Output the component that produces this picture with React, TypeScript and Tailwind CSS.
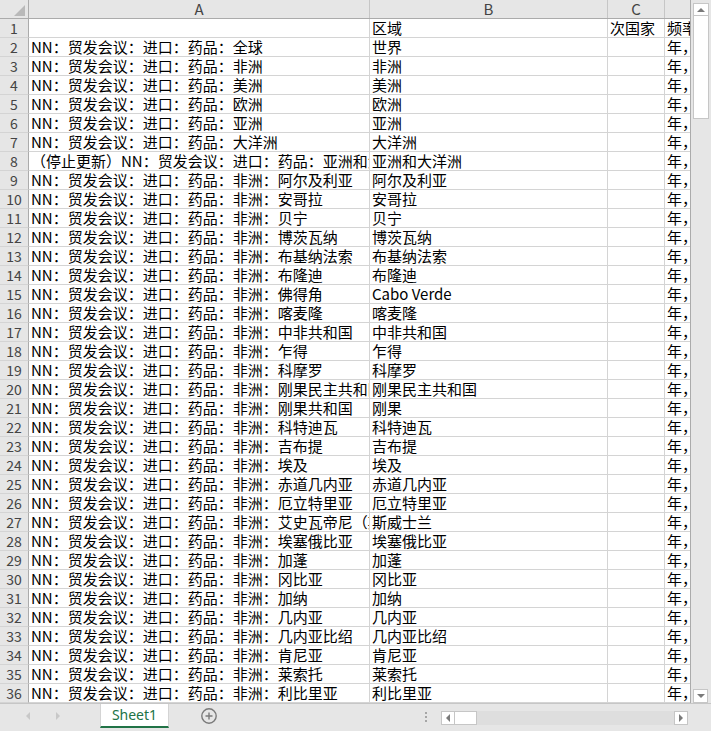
const P = 'NN：贸发会议：进口：药品：'

// [A, B] for rows 2..36
const ROWS: [string, string][] = [
  [P + '全球', '世界'],
  [P + '非洲', '非洲'],
  [P + '美洲', '美洲'],
  [P + '欧洲', '欧洲'],
  [P + '亚洲', '亚洲'],
  [P + '大洋洲', '大洋洲'],
  ['（停止更新）' + P + '亚洲和大洋洲', '亚洲和大洋洲'],
  [P + '非洲：阿尔及利亚', '阿尔及利亚'],
  [P + '非洲：安哥拉', '安哥拉'],
  [P + '非洲：贝宁', '贝宁'],
  [P + '非洲：博茨瓦纳', '博茨瓦纳'],
  [P + '非洲：布基纳法索', '布基纳法索'],
  [P + '非洲：布隆迪', '布隆迪'],
  [P + '非洲：佛得角', 'Cabo Verde'],
  [P + '非洲：喀麦隆', '喀麦隆'],
  [P + '非洲：中非共和国', '中非共和国'],
  [P + '非洲：乍得', '乍得'],
  [P + '非洲：科摩罗', '科摩罗'],
  [P + '非洲：刚果民主共和国', '刚果民主共和国'],
  [P + '非洲：刚果共和国', '刚果'],
  [P + '非洲：科特迪瓦', '科特迪瓦'],
  [P + '非洲：吉布提', '吉布提'],
  [P + '非洲：埃及', '埃及'],
  [P + '非洲：赤道几内亚', '赤道几内亚'],
  [P + '非洲：厄立特里亚', '厄立特里亚'],
  [P + '非洲：艾史瓦帝尼（斯威士兰）', '斯威士兰'],
  [P + '非洲：埃塞俄比亚', '埃塞俄比亚'],
  [P + '非洲：加蓬', '加蓬'],
  [P + '非洲：冈比亚', '冈比亚'],
  [P + '非洲：加纳', '加纳'],
  [P + '非洲：几内亚', '几内亚'],
  [P + '非洲：几内亚比绍', '几内亚比绍'],
  [P + '非洲：肯尼亚', '肯尼亚'],
  [P + '非洲：莱索托', '莱索托'],
  [P + '非洲：利比里亚', '利比里亚'],
]

const cell =
  'h-[19px] shrink-0 border-r border-b border-[#d4d4d4] overflow-hidden whitespace-nowrap pl-[2px] text-[15px] leading-[18px]'

function Tri({ dir, color = '#7a7a7a' }: { dir: 'up' | 'down' | 'left' | 'right'; color?: string }) {
  const pts = {
    up: '0,4 4,0 8,4',
    down: '0,0 8,0 4,4',
    left: '4,0 4,8 0,4',
    right: '0,0 0,8 4,4',
  }[dir]
  const vertical = dir === 'up' || dir === 'down'
  return (
    <svg width={vertical ? 8 : 4} height={vertical ? 4 : 8} viewBox={vertical ? '0 0 8 4' : '0 0 4 8'}>
      <polygon points={pts} fill={color} />
    </svg>
  )
}

function Row({ n, a, b, c, d }: { n: number; a: string; b: string; c: string; d: string }) {
  return (
    <div className="flex">
      <div className="w-[29px] h-[19px] shrink-0 border-r border-r-[#ababab] border-b border-b-[#d4d4d4] bg-[#e6e6e6] text-[#444] text-[14px] leading-[18px] text-center">
        {n}
      </div>
      <div className={`${cell} w-[341px]`}>{a}</div>
      <div className={`${cell} w-[238px]`}>{b}</div>
      <div className={`${cell} w-[57px]`}>{c}</div>
      <div className={`${cell} w-[25px] border-r-0`}>{d}</div>
    </div>
  )
}

export default function App() {
  return (
    <div className="w-[711px] h-[731px] flex flex-col bg-[#e6e6e6] overflow-hidden font-['Noto_Sans_CJK_SC','Noto_Sans',sans-serif] text-black">
      <div className="flex h-[703px] shrink-0">
        {/* sheet grid */}
        <div className="w-[691px] h-[703px] flex flex-col bg-white border-r border-[#ababab] overflow-hidden">
          {/* column headers */}
          <div className="flex h-[19px] shrink-0 bg-[#e6e6e6] border-b border-[#ababab] text-[#444] text-[15px] leading-[18px]">
            <div className="w-[29px] shrink-0 border-r border-[#ababab] flex items-end justify-end pr-[3px] pb-[2px]">
              <svg width="11" height="11" viewBox="0 0 11 11">
                <polygon points="11,0 11,11 0,11" fill="#b9b9b9" />
              </svg>
            </div>
            <div className="w-[341px] shrink-0 border-r border-[#c6c6c6] text-center">A</div>
            <div className="w-[238px] shrink-0 border-r border-[#c6c6c6] text-center">B</div>
            <div className="w-[57px] shrink-0 border-r border-[#c6c6c6] text-center">C</div>
            <div className="w-[25px] shrink-0" />
          </div>
          <Row n={1} a="" b="区域" c="次国家" d="频率" />
          {ROWS.map(([a, b], i) => (
            <Row key={i} n={i + 2} a={a} b={b} c="" d="年，" />
          ))}
        </div>

        {/* vertical scrollbar */}
        <div className="w-[20px] flex flex-col pl-[2px] pt-[3px]">
          <div className="w-[16px] h-[13px] bg-white border border-[#c6c6c6] flex items-center justify-center">
            <Tri dir="up" />
          </div>
          <div className="w-[16px] h-[103px] bg-white border border-t-0 border-[#c6c6c6]" />
          <div className="flex-1" />
          <div className="w-[15px] h-[14px] bg-white border border-[#c6c6c6] flex items-center justify-center">
            <Tri dir="down" />
          </div>
        </div>
      </div>

      {/* sheet tabs bar */}
      <div className="h-[28px] flex items-start border-t border-[#c6c6c6]">
        <div className="w-[100px] h-[24px] flex items-center pl-[26px] gap-[26px]">
          <Tri dir="left" color="#c8c8c8" />
          <Tri dir="right" color="#c8c8c8" />
        </div>
        <div className="w-[69px] h-[24px] bg-white border-x border-[#d4d4d4] border-b-2 border-b-[#217346] text-[#217346] text-[14px] leading-[22px] text-center font-['Noto_Sans',sans-serif]">
          Sheet1
        </div>
        <div className="ml-[32px] mt-[4px] w-[16px] h-[16px]">
          <svg width="16" height="16" viewBox="0 0 16 16">
            <circle cx="8" cy="8" r="7.2" fill="none" stroke="#7a7a7a" strokeWidth="1.4" />
            <path d="M8 4.5v7M4.5 8h7" stroke="#7a7a7a" strokeWidth="1.4" />
          </svg>
        </div>
        <div className="ml-[208px] mt-[8px] w-[3px] flex flex-col gap-[2px]">
          <div className="w-[2px] h-[2px] bg-[#a6a6a6]" />
          <div className="w-[2px] h-[2px] bg-[#a6a6a6]" />
          <div className="w-[2px] h-[2px] bg-[#a6a6a6]" />
        </div>
        <div className="ml-[13px] mt-[7px] w-[247px] h-[14px] flex bg-[#dedede]">
          <div className="w-[14px] h-[14px] bg-white border border-[#c6c6c6] flex items-center justify-center">
            <Tri dir="left" />
          </div>
          <div className="w-[22px] h-[14px] bg-white border border-l-0 border-[#c6c6c6]" />
          <div className="flex-1" />
          <div className="w-[14px] h-[14px] bg-white border border-[#c6c6c6] flex items-center justify-center">
            <Tri dir="right" />
          </div>
        </div>
      </div>
    </div>
  )
}
